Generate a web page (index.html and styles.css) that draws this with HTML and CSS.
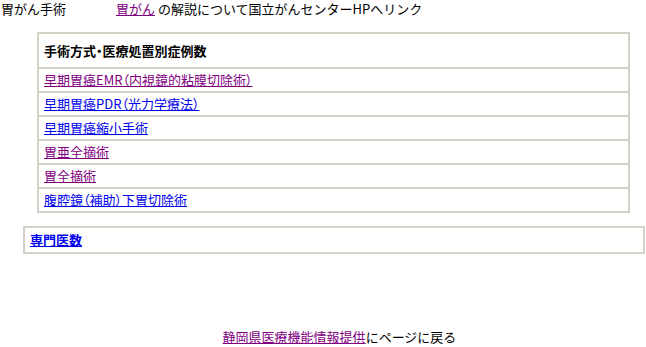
FILE: index.html
```html
<!DOCTYPE html>
<html lang="ja">
<head>
  <meta charset="UTF-8"/>
  <meta name="viewport" content="width=device-width, initial-scale=1.0"/>
  <title>胃がん手術</title>
  <link rel="stylesheet" href="styles.css">
</head>
<body>
  <div class="top-line">
    <span class="page-title">胃がん手術</span>
    <span class="ncc"><a href="#" class="visited">胃がん</a> の解説について国立がんセンターHPへリンク</span>
  </div>

  <div class="case-table">
    <div class="case-head">手術方式・医療処置別症例数</div>
    <div class="case-row"><a href="#" class="visited">早期胃癌EMR（内視鏡的粘膜切除術）</a></div>
    <div class="case-row"><a href="#">早期胃癌PDR（光力学療法）</a></div>
    <div class="case-row"><a href="#">早期胃癌縮小手術</a></div>
    <div class="case-row"><a href="#" class="visited">胃亜全摘術</a></div>
    <div class="case-row"><a href="#" class="visited">胃全摘術</a></div>
    <div class="case-row"><a href="#">腹腔鏡（補助）下胃切除術</a></div>
  </div>

  <div class="doctor-box">
    <a href="#" class="bold-link">専門医数</a>
  </div>

  <div class="footer">
    <a href="#" class="visited">静岡県医療機能情報提供</a>にページに戻る
  </div>
</body>
</html>
```

FILE: styles.css
```css
body {
  margin: 0;
  font-family: "Noto Sans CJK JP", sans-serif;
  font-size: 13px;
  color: #000;
  background: #fff;
  width: 646px;
  height: 347px;
  position: relative;
}

a {
  color: #0000ee;
  text-decoration: underline;
}

a.visited {
  color: #800080;
}

.top-line {
  display: flex;
  height: 18px;
  line-height: 18px;
  padding-left: 1px;
}

.page-title {
  width: 115px;
}

.case-table {
  margin: 14px 0 0 37px;
  width: 589px;
  border: 2px solid #d4d0c8;
}

.case-head {
  height: 33px;
  line-height: 33px;
  padding-left: 5px;
  font-weight: bold;
  font-feature-settings: "palt";
  border-bottom: 2px solid #d4d0c8;
}

.case-row {
  height: 22px;
  line-height: 22px;
  padding-left: 5px;
  font-feature-settings: "palt";
  border-bottom: 2px solid #d4d0c8;
}

.case-row:last-child {
  border-bottom: none;
}

.doctor-box {
  margin: 13px 0 0 23px;
  width: 613px;
  height: 24px;
  line-height: 24px;
  border: 2px solid #d4d0c8;
  padding-left: 5px;
}

.bold-link {
  font-weight: bold;
  color: #0000ee;
}

.footer {
  position: absolute;
  left: 0;
  right: 0;
  top: 328px;
  line-height: 18px;
  padding-left: 33px;
  text-align: center;
}
```
